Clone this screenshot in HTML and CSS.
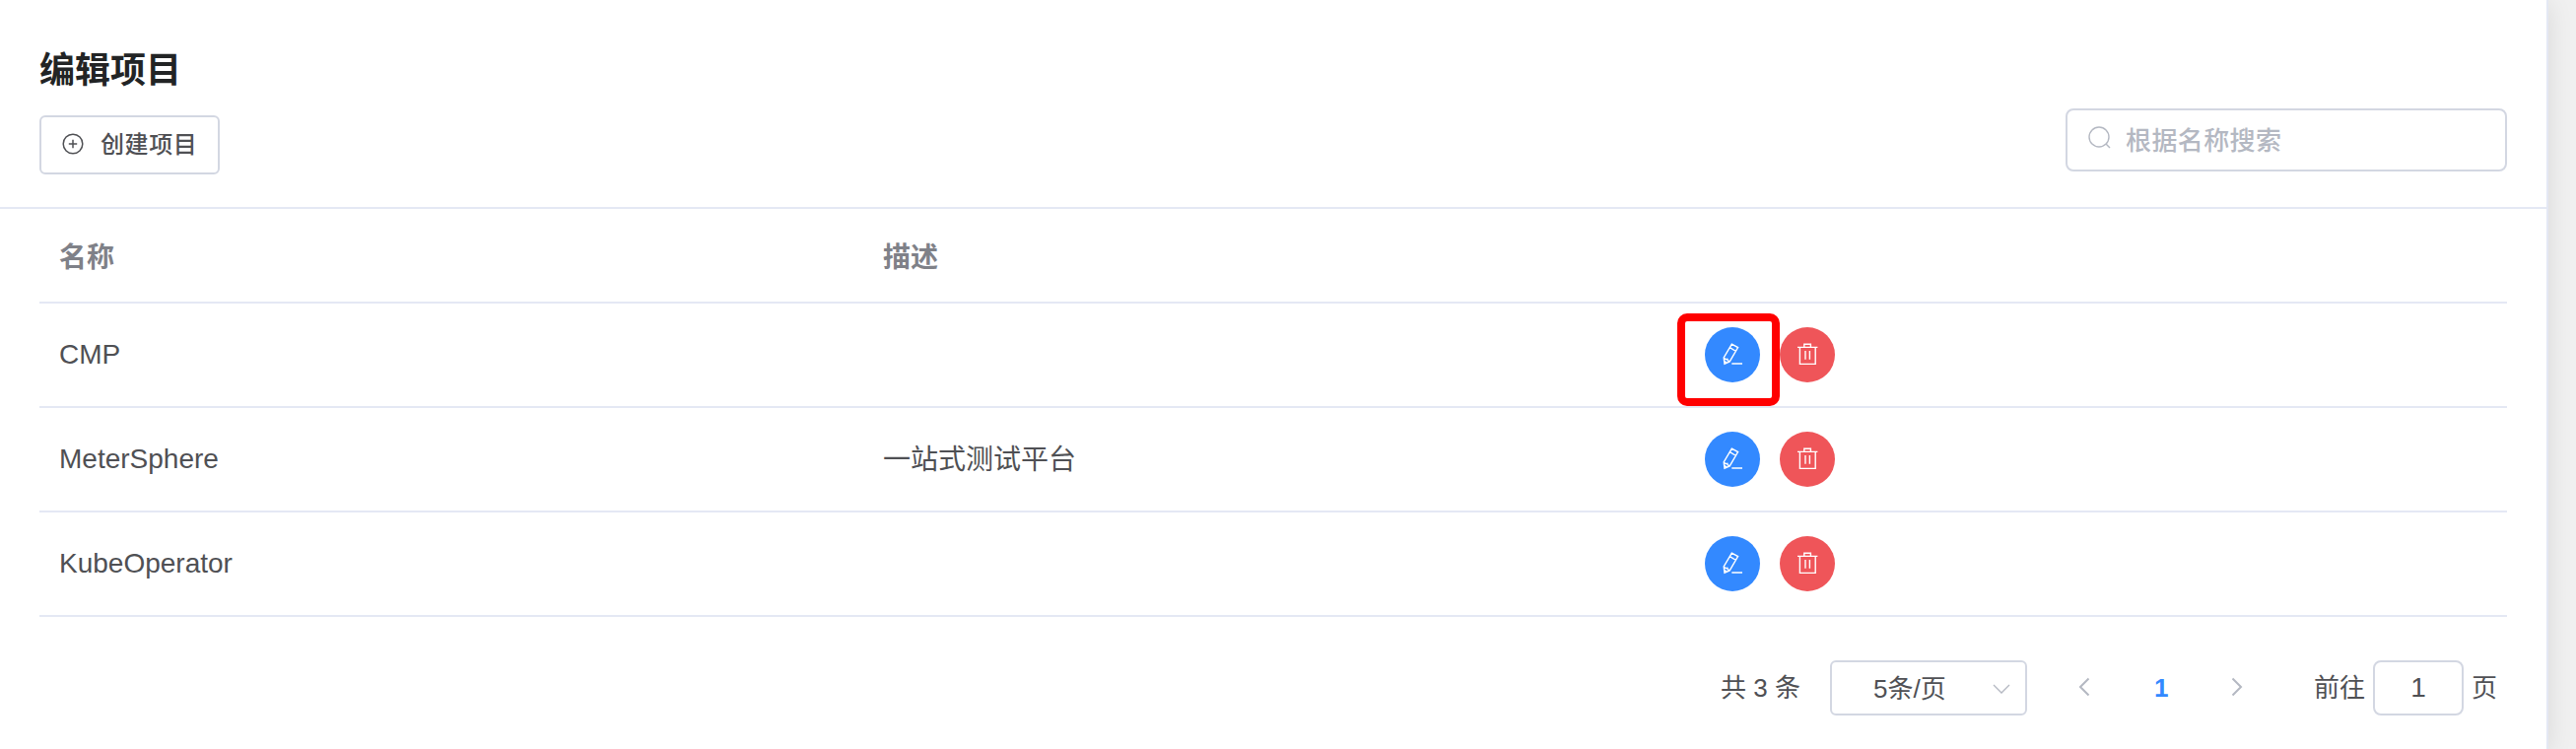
FILE: index.html
```html
<!DOCTYPE html>
<html lang="zh-CN">
<head>
<meta charset="utf-8">
<title>编辑项目</title>
<link rel="stylesheet" href="styles.css">
</head>
<body>
<svg class="sprite" aria-hidden="true">
  <symbol id="edit" viewBox="0 0 28 28">
    <path d="M13.3 3.1 19.6 6.6 11.2 20.9 6 23.2 5.2 17zM11.4 6.7l6.2 3.8M5.2 17l1.8 1.6 1.8-.4.6 1.8 1.8.9M5.6 20.4l2.6 1.8M13.3 23H24"/>
  </symbol>
  <symbol id="trash" viewBox="0 0 28 28">
    <path d="M4 6.4h20.4M6.4 6.4v17h15.8v-17M10.8 6.4V3.2h6.6v3.2M12 10v8.8M16.4 10v8.8"/>
  </symbol>
</svg>
<main class="card">
  <header class="card-header">
    <div>
      <h1 class="title">编辑项目</h1>
      <button class="create">
        <svg class="plus" viewBox="0 0 22 22"><circle cx="11" cy="11" r="9.8"/><path d="M11 6.8v8.4M6.8 11h8.4"/></svg>
        <span>创建项目</span>
      </button>
    </div>
    <div class="search">
      <svg class="magnifier" viewBox="0 0 24 24"><circle cx="11" cy="11" r="10"/><path d="m18 18 4 4"/></svg>
      <span>根据名称搜索</span>
    </div>
  </header>
  <section class="card-body">
    <div class="row head"><div>名称</div><div>描述</div><div></div></div>
    <div class="row">
      <div>CMP</div><div></div>
      <div class="actions">
        <span class="round blue"><svg class="icon"><use href="#edit"/></svg></span>
        <span class="round red"><svg class="icon"><use href="#trash"/></svg></span>
        <span class="highlight"></span>
      </div>
    </div>
    <div class="row">
      <div>MeterSphere</div><div class="desc">一站式测试平台</div>
      <div class="actions">
        <span class="round blue"><svg class="icon"><use href="#edit"/></svg></span>
        <span class="round red"><svg class="icon"><use href="#trash"/></svg></span>
      </div>
    </div>
    <div class="row">
      <div>KubeOperator</div><div></div>
      <div class="actions">
        <span class="round blue"><svg class="icon"><use href="#edit"/></svg></span>
        <span class="round red"><svg class="icon"><use href="#trash"/></svg></span>
      </div>
    </div>
    <nav class="pager">
      <span class="total">共 3 条</span>
      <div class="select"><span>5条/页</span><svg class="caret" viewBox="0 0 18 10"><path d="m1 1 8 8 8-8"/></svg></div>
      <svg class="arrow" viewBox="0 0 12 20"><path d="M10.5 1.5 2 10l8.5 8.5"/></svg>
      <span class="current">1</span>
      <svg class="arrow" viewBox="0 0 12 20"><path d="M1.5 1.5 10 10l-8.5 8.5"/></svg>
      <span class="goto">前往</span>
      <div class="jump"><span>1</span></div>
      <span class="unit">页</span>
    </nav>
  </section>
</main>
</body>
</html>
```
FILE: styles.css
```css
* { box-sizing: border-box; }
body {
  margin: 0;
  height: 760px;
  overflow: hidden;
  background: #f0f0f0;
  color: #4f5054;
  font-family: "Liberation Sans", "Noto Sans CJK SC", sans-serif;
  font-size: 28px;
}
svg { display: block; fill: none; flex: none; }
.sprite { display: none; }
.card {
  width: 2586px;
  height: 760px;
  background: #fff;
  border-right: 2px solid #e4e8f4;
  box-shadow: 0 4px 24px rgba(0, 0, 0, .1);
}
.card-header {
  display: flex;
  justify-content: space-between;
  height: 212px;
  padding: 44px 40px 0;
  border-bottom: 2px solid #e4e8f4;
}
.title {
  margin: 0 0 19px;
  padding-top: 2px;
  font-size: 36px;
  line-height: 52px;
  font-weight: 700;
  color: #222425;
}
.create {
  display: flex;
  align-items: center;
  width: 183px;
  height: 60px;
  padding: 0 0 2px 21px;
  border: 2px solid #d3d7e2;
  border-radius: 6px;
  background: #fff;
  color: #4f5054;
  font: 500 24px "Liberation Sans", "Noto Sans CJK SC", sans-serif;
  letter-spacing: .6px;
}
.create span { padding-bottom: 3px; }
.plus { width: 22px; height: 22px; margin-right: 17px; stroke: currentColor; stroke-width: 1.5; }
.search {
  display: flex;
  align-items: center;
  width: 448px;
  height: 64px;
  margin-top: 66px;
  padding-left: 21px;
  border: 2px solid #d3d7e2;
  border-radius: 8px;
  color: #b4b8c2;
  font-size: 26px;
  font-weight: 500;
  letter-spacing: .4px;
}
.search span { padding-bottom: 4px; }
.magnifier { width: 24px; height: 24px; margin: 0 14px 4px 0; stroke: #b4b8c2; stroke-width: 1.4; }
.card-body { padding: 0 40px; }
.row {
  display: grid;
  grid-template-columns: 836px 834px 1fr;
  align-items: center;
  height: 106px;
  border-bottom: 2px solid #e4e8f4;
}
.row > div { padding-left: 20px; }
.row > .desc { padding-bottom: 4px; }
.row.head { height: 96px; color: #7f8188; font-weight: 700; }
.actions { display: flex; gap: 20px; position: relative; }
.round {
  display: flex;
  align-items: center;
  justify-content: center;
  width: 56px;
  height: 56px;
  border-radius: 50%;
}
.blue { background: #3389ff; }
.red { background: #ef5559; }
.icon { width: 28px; height: 28px; stroke: #fff; stroke-width: 1.4; }
.highlight {
  position: absolute;
  left: -8px;
  top: -14px;
  width: 104px;
  height: 94px;
  border: 8px solid #f00;
  border-radius: 10px;
}
.pager {
  display: flex;
  align-items: center;
  height: 56px;
  margin-top: 44px;
  font-size: 26px;
}
.total { width: 111px; margin-left: 1706px; padding-bottom: 6px; white-space: nowrap; }
.select {
  display: flex;
  align-items: center;
  width: 200px;
  height: 56px;
  padding-left: 42px;
  border: 2px solid #d3d7e2;
  border-radius: 6px;
}
.select span { padding-bottom: 3px; }
.caret { width: 18px; height: 10px; margin: 2px 0 0 47px; stroke: #b4b8c2; stroke-width: 1.3; }
.arrow { width: 12px; height: 20px; margin: 0 0 3px 52px; stroke: #b4b8c2; stroke-width: 2; }
.current { margin-left: 65px; width: 14px; color: #3389ff; font-weight: 700; }
.current + .arrow { margin-left: 64px; }
.goto { margin-left: 72px; padding-bottom: 6px; width: 60px; }
.jump {
  display: flex;
  align-items: center;
  justify-content: center;
  width: 92px;
  height: 56px;
  border: 2px solid #d3d7e2;
  border-radius: 8px;
  font-size: 28px;
}
.unit { margin-left: 8px; padding-bottom: 6px; }
```
